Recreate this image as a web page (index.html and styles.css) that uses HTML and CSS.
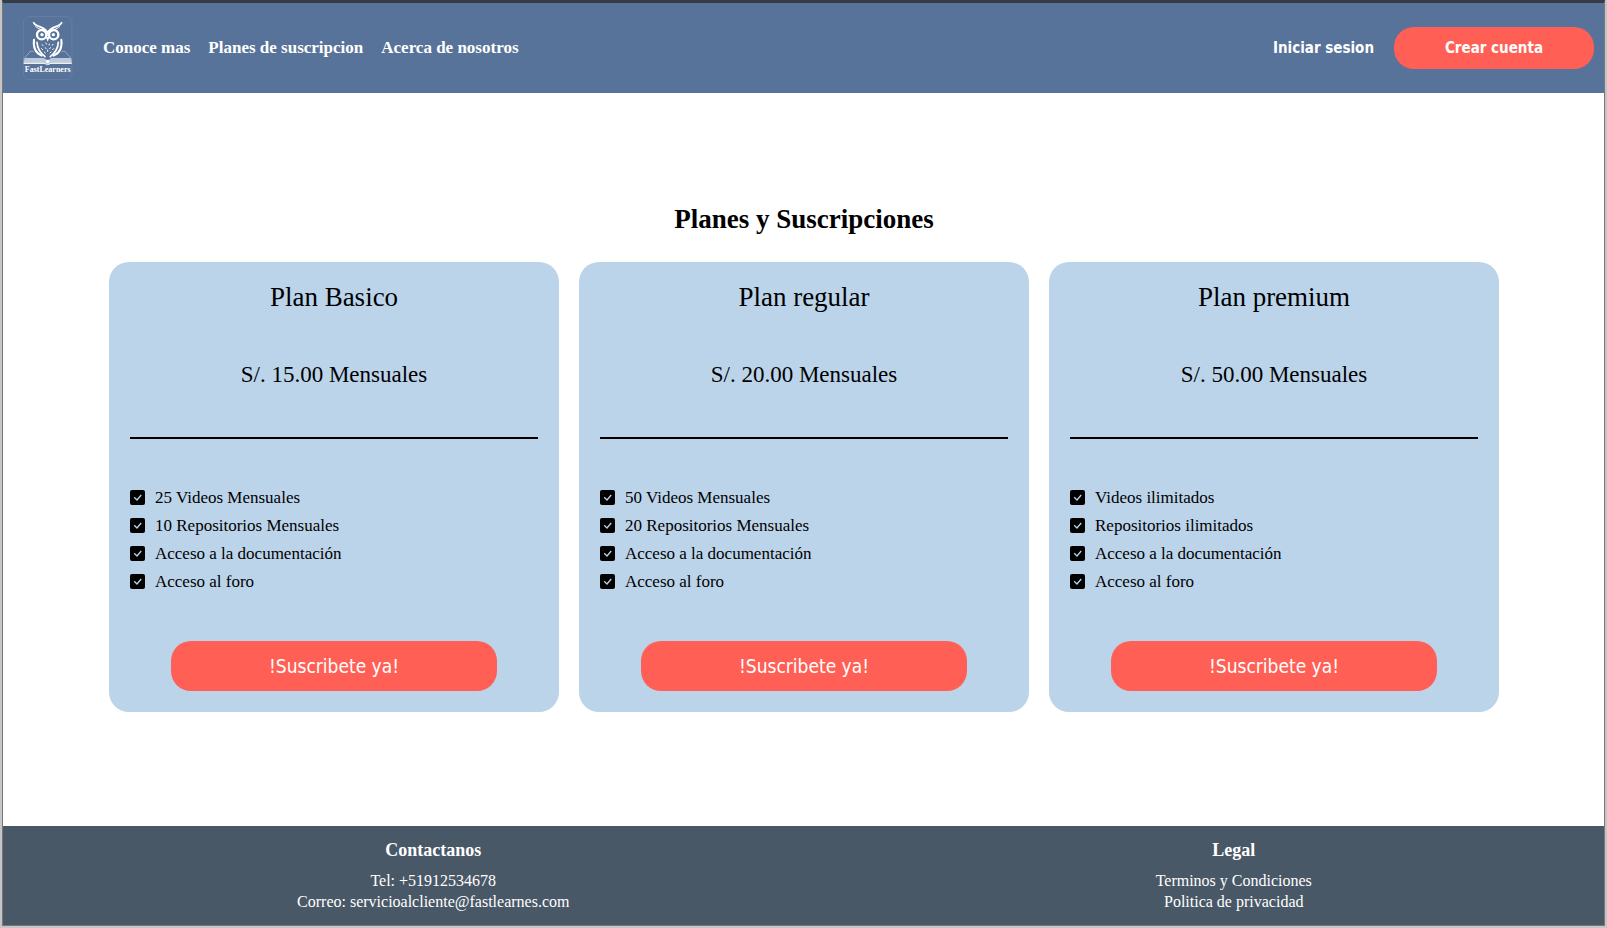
FILE: index.html
```html
<!DOCTYPE html>
<html lang="es">
<head>
<meta charset="utf-8">
<meta name="viewport" content="width=device-width, initial-scale=1">
<title>FastLearners</title>
<link rel="stylesheet" href="styles.css">
</head>
<body>
<svg class="sprite" aria-hidden="true">
  <symbol id="check" viewBox="0 0 15 15">
    <rect width="15" height="15" rx="2"/>
    <path d="M4.200 7.300 L7 10 L11.200 5" fill="none" stroke="#bcd4ea" stroke-width="1.300"/>
  </symbol>
</svg>
<div class="page">
  <header class="header">
    <a class="logo" href="#">
      <svg class="logo-art" viewBox="70 46 150 194" role="img" aria-label="FastLearners">
        <path d="M84 49H205L217 62V225L205 238H84L71 225V62Z" fill="none" stroke="#6a84aa" stroke-width="2"/>
        <g fill="none" stroke="#fff" stroke-linecap="round">
          <path d="M102 67C108 82 136 76 144 98C152 76 180 82 186 67" stroke-width="5"/>
          <path d="M108 79C117 87 133 88 144 106C155 88 171 87 180 79" stroke-width="3"/>
          <circle cx="126" cy="103" r="14" stroke-width="7"/>
          <circle cx="162" cy="103" r="14" stroke-width="7"/>
          <path d="M103 118C100 142 107 158 126 166M185 118C188 142 181 158 162 166" stroke-width="6"/>
          <path d="M112 126C113 144 120 156 136 169M176 126C175 144 168 156 152 169" stroke-width="5"/>
          <path d="M128 133L130 136M139 128L140 131M149 131L148 134M160 132L158 135M126 145L129 148M137 142L139 145M152 142L150 145M162 145L159 148M134 155L137 158M154 155L151 158M144 149V153" stroke-width="3"/>
          <path d="M101 153H92L73 175V189H215V175L196 153H187" stroke="#b4c2d6" stroke-width="2"/>
        </g>
        <circle cx="127" cy="103" r="5" fill="#fff"/>
        <circle cx="161" cy="103" r="5" fill="#fff"/>
        <path d="M138 109L144 124L150 109Z" fill="#fff"/>
        <path d="M75 173H132L144 180L156 173H213L216 188H153L144 192L135 188H72Z" fill="#bdcadc"/>
        <path d="M72 189H134L144 193L154 189H216" fill="none" stroke="#fff" stroke-width="3"/>
        <circle cx="144" cy="183" r="5" fill="#fff"/>
        <text class="logo-text" x="144" y="216" text-anchor="middle">FastLearners</text>
      </svg>
    </a>
    <nav class="nav">
      <a href="#">Conoce mas</a>
      <a href="#">Planes de suscripcion</a>
      <a href="#">Acerca de nosotros</a>
    </nav>
    <div class="account">
      <button class="login" type="button">Iniciar sesion</button>
      <button class="signup" type="button">Crear cuenta</button>
    </div>
  </header>

  <main class="main">
    <h1 class="title">Planes y Suscripciones</h1>
    <div class="plans">
      <section class="plan">
        <h2 class="plan-name">Plan Basico</h2>
        <p class="price">S/. 15.00 Mensuales</p>
        <hr class="rule">
        <ul class="features">
          <li><svg class="check"><use href="#check"/></svg>25 Videos Mensuales</li>
          <li><svg class="check"><use href="#check"/></svg>10 Repositorios Mensuales</li>
          <li><svg class="check"><use href="#check"/></svg>Acceso a la documentación</li>
          <li><svg class="check"><use href="#check"/></svg>Acceso al foro</li>
        </ul>
        <button class="subscribe" type="button">!Suscribete ya!</button>
      </section>
      <section class="plan">
        <h2 class="plan-name">Plan regular</h2>
        <p class="price">S/. 20.00 Mensuales</p>
        <hr class="rule">
        <ul class="features">
          <li><svg class="check"><use href="#check"/></svg>50 Videos Mensuales</li>
          <li><svg class="check"><use href="#check"/></svg>20 Repositorios Mensuales</li>
          <li><svg class="check"><use href="#check"/></svg>Acceso a la documentación</li>
          <li><svg class="check"><use href="#check"/></svg>Acceso al foro</li>
        </ul>
        <button class="subscribe" type="button">!Suscribete ya!</button>
      </section>
      <section class="plan">
        <h2 class="plan-name">Plan premium</h2>
        <p class="price">S/. 50.00 Mensuales</p>
        <hr class="rule">
        <ul class="features">
          <li><svg class="check"><use href="#check"/></svg>Videos ilimitados</li>
          <li><svg class="check"><use href="#check"/></svg>Repositorios ilimitados</li>
          <li><svg class="check"><use href="#check"/></svg>Acceso a la documentación</li>
          <li><svg class="check"><use href="#check"/></svg>Acceso al foro</li>
        </ul>
        <button class="subscribe" type="button">!Suscribete ya!</button>
      </section>
    </div>
  </main>

  <footer class="footer">
    <section class="footer-col">
      <h3>Contactanos</h3>
      <p>Tel: +51912534678</p>
      <p>Correo: servicioalcliente@fastlearnes.com</p>
    </section>
    <section class="footer-col">
      <h3>Legal</h3>
      <a href="#">Terminos y Condiciones</a>
      <a href="#">Politica de privacidad</a>
    </section>
  </footer>
</div>
</body>
</html>
```
FILE: styles.css
```css
* {
  box-sizing: border-box;
  margin: 0;
  padding: 0;
}

body {
  min-height: 100vh;
  display: flex;
  padding: 0 2px 2px;
  background: #c6c6c6;
  color: #000;
  font-family: "Liberation Serif", "Times New Roman", serif;
  font-size: 17px;
}

a {
  color: inherit;
  text-decoration: none;
}

button {
  border: 0;
  color: #fff;
  font-family: "DejaVu Sans Condensed", Tahoma, sans-serif;
  cursor: pointer;
}

.sprite {
  position: absolute;
  width: 0;
  height: 0;
}

.page {
  flex: 1;
  display: flex;
  flex-direction: column;
  background: #fff;
  border: 1px solid #777;
  border-top: 3px solid #373a49;
}

.header {
  display: flex;
  align-items: center;
  padding: 12px 10px 12px 20px;
  background: #587399;
  color: #fff;
}

.logo-art {
  display: block;
  width: 50px;
  height: 66px;
}

.logo-text {
  fill: #fff;
  font-size: 24px;
  font-weight: 700;
}

.nav {
  display: flex;
  gap: 18px;
  margin-left: 30px;
  font-weight: 700;
}

.account {
  display: flex;
  align-items: center;
  gap: 20px;
  margin-left: auto;
}

.login,
.signup {
  font-size: 15px;
  font-weight: 700;
}

.login {
  background: none;
}

.signup {
  width: 200px;
  height: 42px;
  border-radius: 20px;
  background: #ff5f55;
}

.main {
  flex: 1;
  display: flex;
  flex-direction: column;
  justify-content: center;
  gap: 30px;
  padding: 20px 105px 20px 106px;
}

.title {
  font-size: 27px;
  line-height: 25px;
  text-align: center;
}

.plans {
  display: grid;
  grid-template-columns: repeat(3, 1fr);
  gap: 20px;
}

.plan {
  display: flex;
  flex-direction: column;
  gap: 45px;
  padding: 21px;
  border-radius: 20px;
  background: #bcd4ea;
}

.plan-name,
.price {
  padding-bottom: 3px;
  font-weight: 400;
  line-height: 29px;
  text-align: center;
}

.plan-name {
  font-size: 27px;
}

.price {
  font-size: 23px;
}

.rule {
  border: 0;
  border-top: 2px solid #000;
}

.features {
  list-style: none;
  line-height: 28px;
}

.features li {
  display: flex;
  align-items: center;
  gap: 10px;
}

.check {
  width: 15px;
  height: 15px;
  margin-bottom: 1px;
}

.subscribe {
  align-self: center;
  width: 80%;
  height: 50px;
  border-radius: 20px;
  background: #ff5f55;
  font-size: 19px;
}

.footer {
  display: grid;
  grid-template-columns: 1fr 1fr;
  padding: 12px 0 13px;
  background: #495867;
  color: #fff;
  font-size: 16px;
  line-height: 21px;
  text-align: center;
}

.footer-col {
  display: flex;
  flex-direction: column;
  align-items: center;
  padding-left: 60px;
}

.footer-col h3 {
  margin-bottom: 8px;
  font-size: 18px;
  line-height: 24px;
}
```
